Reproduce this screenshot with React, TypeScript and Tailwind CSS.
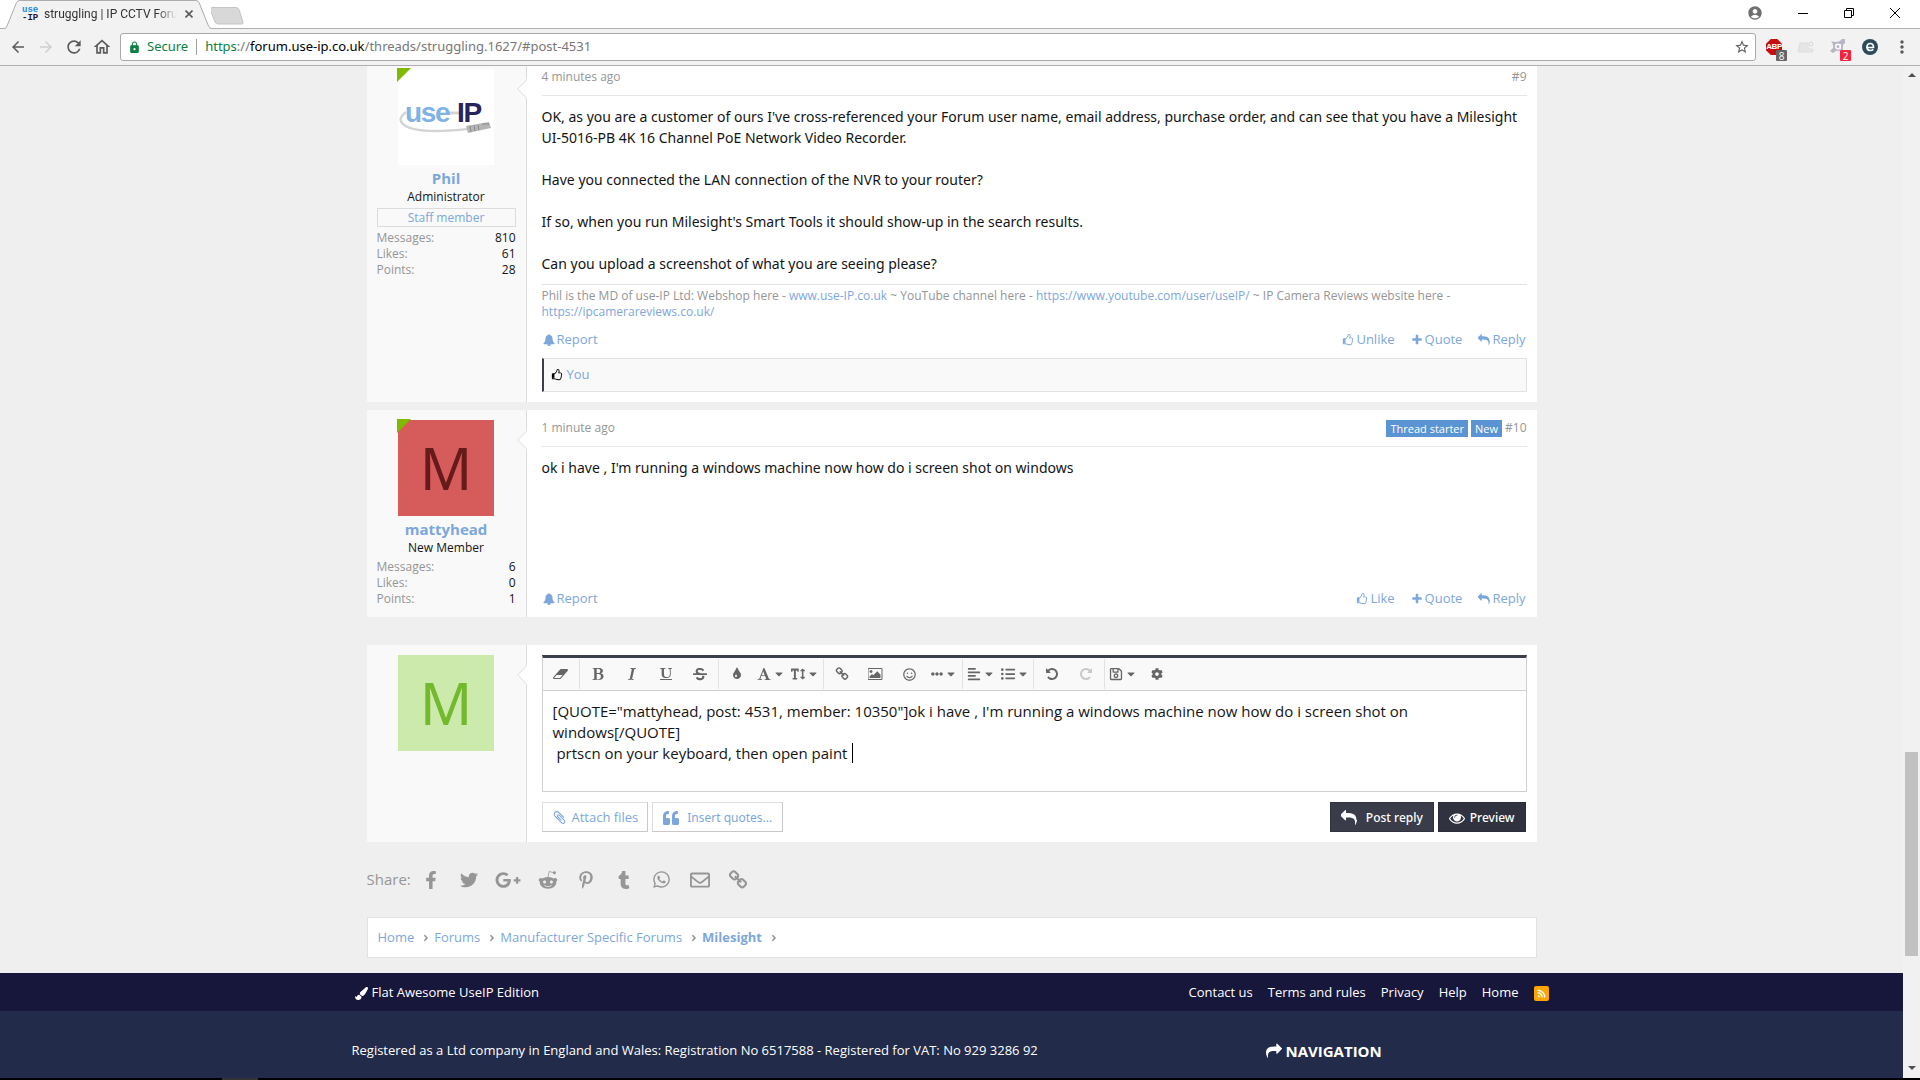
import type { ReactNode } from 'react'
import {
  FaAlignLeft,
  FaAngleRight,
  FaCaretDown,
  FaCog,
  FaEllipsisH,
  FaFacebookF,
  FaGooglePlusG,
  FaListUl,
  FaPaintBrush,
  FaPinterestP,
  FaQuoteLeft,
  FaRedditAlien,
  FaRegEnvelope,
  FaRegSave,
  FaRegSmile,
  FaRss,
  FaStrikethrough,
  FaTextHeight,
  FaTumblr,
  FaTwitter,
  FaWhatsapp,
} from 'react-icons/fa'
import {
  MdAccountCircle,
  MdArrowBack,
  MdArrowForward,
  MdLock,
  MdMoreVert,
  MdOutlineHome,
  MdRefresh,
  MdStarBorder,
} from 'react-icons/md'

const paths = {
  bell: 'M912 1696q0-16-16-16-59 0-101.5-42.5t-42.5-101.5q0-16-16-16t-16 16q0 73 51.5 124.5t124.5 51.5q16 0 16-16zm816-288q0 52-38 90t-90 38h-448q0 106-75 181t-181 75-181-75-75-181h-448q-52 0-90-38t-38-90q50-42 91-88t85-119.5 74.5-158.5 50-206 19.5-260q0-152 117-282.5t307-158.5q-8-19-8-39 0-40 28-68t68-28 68 28 28 68q0 20-8 39 190 28 307 158.5t117 282.5q0 139 19.5 260t50 206 74.5 158.5 85 119.5 91 88z',
  bold: 'M747 1521q74 32 140 32 376 0 376-335 0-114-41-180-27-44-61.5-74t-67.5-46.5-80.5-25-84-10.5-94.5-2q-73 0-101 10 0 53-.5 159t-.5 158q0 8-1 67.5t-.5 96.5 4.5 83.5 12 66.5zm-14-746q42 7 109 7 82 0 143-13t110-44.5 74.5-89.5 25.5-142q0-70-29-122.5t-79-82-108-43.5-124-14q-50 0-130 13 0 50 4 151t4 152q0 27-.5 80t-.5 79q0 46 1 69zm-541 889l2-94q15-4 85-16t106-27q7-12 12.5-27t8.5-33.5 5.5-32.5 3-37.5.5-34v-65.5q0-982-22-1025-4-8-22-14.5t-44.5-11-49.5-7-48.5-4.5-30.5-3l-4-83q98-2 340-11.5t373-9.5q23 0 68 .5t68 .5q70 0 136.5 13t128.5 42 108 71 74 104.5 28 137.5q0 52-16.5 95.5t-39 72-64.5 57.5-73 45-84 40q154 35 256.5 134t102.5 248q0 100-35 179.5t-93.5 130.5-138 85.5-163.5 48.5-176 14q-44 0-132-3t-132-3q-106 0-307 11t-231 12z',
  italic:
    'M384 1662l17-85q6-2 81.5-21.5t111.5-37.5q28-35 41-101 1-7 62-289t114-543.5 52-296.5v-25q-24-13-54.5-18.5t-69.5-8-58-5.5l19-103q33 2 120 6.5t149.5 7 120.5 2.5q48 0 98.5-2.5t121-7 98.5-6.5q-5 39-19 89-30 10-101.5 28.5t-108.5 33.5q-8 19-14 42.5t-9 40-7.5 45.5-6.5 42q-27 148-87.5 419.5t-77.5 355.5q-2 9-13 58t-20 90-16 83.5-6 57.5l1 18q17 4 185 31-3 44-16 99-11 0-32.5 1.5t-32.5 1.5q-29 0-87-10t-86-10q-138-2-206-2-51 0-143 9t-121 11z',
  underline:
    'M176 223q-37-2-45-4l-3-88q13-1 40-1 60 0 112 4 132 7 166 7 86 0 168-3 116-4 146-5 56 0 86-2l-1 14 2 64v9q-60 9-124 9-60 0-79 25-13 14-13 132 0 13 .5 32.5t.5 25.5l1 229 14 280q6 124 51 202 35 59 96 92 88 47 177 47 104 0 191-28 56-18 99-51 48-36 65-64 36-56 53-114 21-73 21-229 0-79-3.5-128t-11-122.5-13.5-159.5l-4-59q-5-67-24-88-34-35-77-34l-100 2-14-3 2-86h84l205 10q76 3 196-10l18 2q6 38 6 51 0 7-4 31-45 12-84 13-73 11-79 17-15 15-15 41 0 7 1.5 27t1.5 31q8 19 22 396 6 195-15 304-15 76-41 122-38 65-112 123-75 57-182 89-109 33-255 33-167 0-284-46-119-47-179-122-61-76-83-195-16-80-16-237v-333q0-188-17-213-25-36-147-39zm1488 1409v-64q0-14-9-23t-23-9h-1472q-14 0-23 9t-9 23v64q0 14 9 23t23 9h1472q14 0 23-9t9-23z',
  font: 'M789 559l-170 450q33 0 136.5 2t160.5 2q19 0 57-2-87-253-184-452zm-725 1105l2-79q23-7 56-12.5t57-10.5 49.5-14.5 44.5-29 31-50.5l237-616 280-724h128q8 14 11 21l205 480q33 78 106 257.5t114 274.5q15 34 58 144.500t72 168.500q20 45 35 57 19 15 88 29.500t84 20.500q6 38 6 57 0 5-.5 13.500t-.5 12.500q-63 0-190-8t-191-8q-76 0-215 7t-178 8q0-43 4-78l131-28q1 0 12.500-2.500t15.500-3.500 14.500-4.500 15-6.500 11-8 9-11 2.500-14q0-16-31-96.500t-72-177.500-42-100l-450-2q-26 58-76.500 195.500t-50.500 162.500q0 22 14 37.500t43.500 24.500 48.500 13.500 57 8.500 41 4q1 19 1 58 0 9-2 27-58 0-174.500-10t-174.500-10q-8 0-26.500 4t-21.500 4q-80 14-188 14z',
  reply:
    'M1792 1120q0 166-127 451-3 7-10.5 24t-13.5 30-13 22q-12 17-28 17-15 0-23.5-10t-8.5-25q0-9 2.5-26.5t2.5-23.5q5-68 5-123 0-112-19.5-200.5t-54-153.5-89-112-117-78-147-46.5-169.5-23-197-5.5h-224v256q0 26-19 45t-45 19-45-19l-512-512q-19-19-19-45t19-45l512-512q19-19 45-19t45 19 19 45v256h224q713 0 875 403 53 134 53 333z',
  share:
    'M1792 640q0 26-19 45l-512 512q-19 19-45 19t-45-19-19-45v-256h-224q-98 0-175.5 6t-154 21.5-133 42.5-105.5 69.5-80 101-48.5 138.5-17.5 181q0 55 5 123 0 6 2.5 23.5t2.5 26.5q0 15-8.5 25t-23.5 10q-16 0-28-17-7-9-13-22t-13.5-30-10.5-24q-127-285-127-451 0-199 53-333 162-403 875-403h224v-256q0-26 19-45t45-19 45 19l512 512q19 19 19 45z',
  plus: 'M1600 736v192q0 40-28 68t-68 28h-416v416q0 40-28 68t-68 28h-192q-40 0-68-28t-28-68v-416h-416q-40 0-68-28t-28-68v-192q0-40 28-68t68-28h416v-416q0-40 28-68t68-28h192q40 0 68 28t28 68v416h416q40 0 68 28t28 68z',
  thumb:
    'M384 1344q0-26-19-45t-45-19-45 19-19 45 19 45 45 19 45-19 19-45zm1152-576q0-51-39-89.5t-89-38.5h-352q0-58 48-159.5t48-160.5q0-98-32-145t-128-47q-26 26-38 85t-30.5 125.5-59.5 109.5q-22 23-77 91-4 5-23 30t-31.5 41-34.5 42.5-40 44-38.5 35.5-40 27-35.5 9h-32v640h32q13 0 31.5 3t33 6.5 38 11 35 11.5 35.5 12.5 29 10.5q211 73 342 73h121q192 0 192-167 0-26-5-56 30-16 47.5-52.5t17.5-73.5-18-69q53-50 53-119 0-25-10-55.5t-25-47.5q32-1 53.5-47t21.5-81zm128-1q0 89-49 163 9 33 9 69 0 77-38 144 3 21 3 43 0 101-60 178 1 139-85 219.5t-227 80.5h-129q-96 0-189.5-22.5t-216.5-65.5q-116-40-138-40h-288q-53 0-90.5-37.5t-37.5-90.5v-640q0-53 37.5-90.5t90.5-37.5h274q36-24 137-155 58-75 107-128 24-25 35.5-85.5t30.5-126.5 62-108q39-37 90-37 84 0 151 32.5t102 101.5 35 186q0 93-48 192h176q104 0 180 76t76 179z',
  eraser:
    'M896 1408l336-384h-768l-336 384h768zm1013-1077q15 34 9.5 71.5t-30.5 65.5l-896 1024q-38 44-96 44h-768q-38 0-69.5-20.5t-47.5-54.5q-15-34-9.5-71.5t30.5-65.5l896-1024q38-44 96-44h768q38 0 69.5 20.5t47.5 54.5z',
  tint: 'M896 1152q0-36-20-69-1-1-15.5-22.5t-25.5-38-25-44-21-50.5q-4-16-21-16t-21 16q-7 23-21 50.5t-25 44-25.5 38-15.5 22.5q-20 33-20 69 0 53 37.5 90.5t90.5 37.5 90.5-37.5 37.5-90.5zm512-128q0 212-150 362t-362 150-362-150-150-362q0-145 81-275 6-9 62.5-90.5t101-151 99.5-178 83-201.5q9-30 34-47t51-17 51.5 17 33.5 47q28 93 83 201.5t99.5 178 101 151 62.5 90.5q81 127 81 275z',
  picture:
    'M576 576q0 80-56 136t-136 56-136-56-56-136 56-136 136-56 136 56 56 136zm1024 384v448h-1408v-192l320-320 160 160 512-512zm96-704h-1600q-13 0-22.5 9.5t-9.5 22.5v1216q0 13 9.5 22.5t22.5 9.5h1600q13 0 22.5-9.5t9.5-22.5v-1216q0-13-9.5-22.5t-22.5-9.5zm160 32v1216q0 66-47 113t-113 47h-1600q-66 0-113-47t-47-113v-1216q0-66 47-113t113-47h1600q66 0 113 47t47 113z',
  chain:
    'M1520 1216q0-40-28-68l-208-208q-28-28-68-28-42 0-72 32 3 3 19 18.5t21.5 21.5 15 19 13 25.5 3.5 27.5q0 40-28 68t-68 28q-15 0-27.5-3.5t-25.5-13-19-15-21.5-21.5-18.5-19q-33 31-33 73 0 40 28 68l206 207q27 27 68 27 40 0 68-26l147-146q28-28 28-67zm-703-705q0-40-28-68l-206-207q-28-28-68-28-39 0-68 27l-147 146q-28 28-28 67 0 40 28 68l208 208q27 27 68 27 42 0 72-31-3-3-19-18.5t-21.5-21.5-15-19-13-25.5-3.5-27.5q0-40 28-68t68-28q15 0 27.5 3.5t25.5 13 19 15 21.5 21.5 18.5 19q33-31 33-73zm895 705q0 120-85 203l-147 146q-83 83-203 83-121 0-204-85l-206-207q-83-83-83-203 0-123 88-209l-88-88q-86 88-208 88-120 0-204-84l-208-208q-84-84-84-204t85-203l147-146q83-83 203-83 121 0 204 85l206 207q83 83 83 203 0 123-88 209l88 88q86-88 208-88 120 0 204 84l208 208q84 84 84 204z',
  undo: 'M1664 896q0 156-61 298t-164 245-245 164-298 61q-172 0-327-72.5t-264-204.5q-7-10-6.5-22.5t8.5-20.5l137-138q10-9 25-9 16 2 23 12 73 95 179 147t225 52q104 0 198.5-40.5t163.5-109.5 109.5-163.5 40.5-198.5-40.5-198.5-109.5-163.5-163.5-109.5-198.5-40.5q-98 0-188 35.5t-160 101.5l137 138q31 30 14 69-17 40-59 40h-448q-26 0-45-19t-19-45v-448q0-42 40-59 39-17 69 14l130 129q107-101 244.5-156.5t284.5-55.5q156 0 298 61t245 164 164 245 61 298z',
  clip: 'M1596 1385q0 117-79 196t-196 79q-135 0-235-100l-777-776q-113-115-113-271 0-159 110-270t269-111q158 0 273 113l605 606q10 10 10 22 0 16-30.5 46.5t-46.5 30.5q-13 0-23-10l-606-607q-79-77-181-77-106 0-179 75t-73 181q0 105 76 181l776 777q63 63 145 63 64 0 106-42t42-106q0-82-63-145l-581-581q-26-24-60-24-29 0-48 19t-19 48q0 32 25 59l410 410q10 10 10 22 0 16-31 47t-47 31q-12 0-22-10l-410-410q-63-61-63-149 0-82 57-139t139-57q88 0 149 63l581 581q100 98 100 235z',
  eye: 'M1664 960q-152-236-381-353 61 104 61 225 0 185-131.5 316.5t-316.5 131.5-316.5-131.5-131.5-316.5q0-121 61-225-229 117-381 353 133 205 333.5 326.5t434.5 121.5 434.5-121.5 333.5-326.5zm-720-384q0-20-14-34t-34-14q-125 0-214.5 89.5t-89.5 214.5q0 20 14 34t34 14 34-14 14-34q0-86 61-147t147-61q20 0 34-14t14-34zm848 384q0 34-20 69-140 230-376.5 368.5t-499.5 138.5-499.5-139-376.5-368q-20-35-20-69t20-69q140-229 376.5-368t499.5-139 499.5 139 376.5 368q20 35 20 69z',
}

type GlyphProps = {
  name: keyof typeof paths
  className?: string
}

function Glyph({ name, className = 'size-3' }: GlyphProps) {
  const width = name === 'eraser' || name === 'picture' ? 1920 : 1792
  return (
    <svg
      viewBox={`0 0 ${width} 1792`}
      fill="currentColor"
      aria-hidden="true"
      className={`shrink-0 ${className}`}
    >
      <path d={paths[name]} />
    </svg>
  )
}

function Tab() {
  return (
    <div className="relative flex h-7 w-[212px] items-center pr-5 pl-[22px]">
      <svg
        viewBox="0 0 212 29"
        className="absolute top-0 left-0 z-10 h-[29px] w-[212px]"
        aria-hidden="true"
      >
        <path d="M4 29 L6 28 L17 1 L19 0 H197 L199 1 L209 28 L212 29 Z" fill="#f2f2f2" />
        <path
          d="M0 28.5 H4 Q6 28.5 7 26 L16.5 2.5 Q17.5 .5 20 .5 H196 Q198 .5 199 2.5 L208.5 26 Q209.5 28.5 212 28.5"
          fill="none"
          stroke="#adadad"
        />
      </svg>
      <div className="relative z-20 flex w-full items-center">
        <span className="w-4 text-center font-['Liberation_Mono'] text-[9px] leading-[8px] font-bold whitespace-nowrap text-[#1d8be8]">
          use
          <span className="block text-[#1a1640]">-IP</span>
        </span>
        <span className="ml-[6px] w-[133px] mask-r-from-85% font-['Roboto'] text-xs whitespace-nowrap text-[#333]">
          struggling | IP CCTV Foru
        </span>
        <button aria-label="Close tab" className="ml-2">
          <svg viewBox="0 0 8 8" className="size-2" stroke="#5a5a5a" strokeWidth="1.6">
            <path d="M.5 .5 L7.5 7.5 M7.5 .5 L.5 7.5" />
          </svg>
        </button>
      </div>
    </div>
  )
}

function TitleBar() {
  return (
    <div className="flex h-7 shrink-0 items-start bg-white">
      <Tab />
      <button aria-label="New tab" className="mt-[7px] -ml-px">
        <svg viewBox="0 0 36 18" className="h-[18px] w-9">
          <path
            d="M1 .5 H25 Q27 .5 28 2.5 L32 15 Q32.5 17 30.5 17 H7 Q5 17 4 15 L-1 2 Z"
            fill="#d8d8d8"
            stroke="#c4c4c4"
          />
        </svg>
      </button>
      <div className="ml-auto flex h-[26px] items-center pr-[2px] text-black">
        <button aria-label="Account" className="mr-[17px]">
          <MdAccountCircle className="size-4 text-[#6e6e6e]" />
        </button>
        <button aria-label="Minimize" className="grid w-[46px] place-items-center">
          <span className="h-px w-[10px] bg-black" />
        </button>
        <button aria-label="Restore" className="grid w-[46px] place-items-center">
          <svg viewBox="0 0 10 10" className="size-[10px]" fill="none" stroke="black">
            <path d="M.5 2.5 H7.5 V9.5 H.5 Z M2.5 2.5 V.5 H9.5 V7.5 H7.5" />
          </svg>
        </button>
        <button aria-label="Close" className="grid w-[46px] place-items-center">
          <svg viewBox="0 0 10 10" className="size-[10px]" stroke="black">
            <path d="M0 0 L10 10 M10 0 L0 10" />
          </svg>
        </button>
      </div>
    </div>
  )
}

function AddressBar() {
  return (
    <div className="flex h-[38px] shrink-0 items-center border-y border-[#b0b0b0] bg-[#f2f2f2] pr-[2px] pl-1 text-[#5a5a5a]">
      <button aria-label="Back" className="grid w-7 place-items-center">
        <MdArrowBack className="size-[18px]" />
      </button>
      <button aria-label="Forward" className="grid w-7 place-items-center text-[#d0d0d0]">
        <MdArrowForward className="size-[18px]" />
      </button>
      <button aria-label="Reload" className="grid w-7 place-items-center">
        <MdRefresh className="size-5" />
      </button>
      <button aria-label="Home" className="grid w-7 place-items-center">
        <MdOutlineHome className="size-5" />
      </button>
      <div className="ml-1 flex h-7 flex-1 items-center rounded-[3px] border border-[#a9a9a9] bg-white pr-[5px] pl-[7px] font-['Noto_Sans'] text-[13px]">
        <MdLock className="size-[13px] text-[#0b8043]" />
        <span className="ml-[6px] text-[#0b8043]">Secure</span>
        <span className="mx-2 h-4 w-px bg-[#a0a0a0]" />
        <div
          role="textbox"
          aria-label="Address"
          contentEditable
          suppressContentEditableWarning
          className="flex-1 whitespace-nowrap text-[#777]"
        >
          <span className="text-[#0b8043]">https</span>://
          <span className="text-black">forum.use-ip.co.uk</span>
          /threads/struggling.1627/#post-4531
        </div>
        <button aria-label="Bookmark this page">
          <MdStarBorder className="size-4" />
        </button>
      </div>
      <div className="ml-[2px] flex items-center">
        <button aria-label="ABP" className="relative grid w-8 place-items-center">
          <span className="grid size-4 place-items-center bg-[#c70d0c] font-['Liberation_Sans'] text-[8px] font-bold tracking-tighter text-white [clip-path:polygon(30%_0,70%_0,100%_30%,100%_70%,70%_100%,30%_100%,0_70%,0_30%)]">
            ABP
          </span>
          <span className="absolute top-[11px] left-[18px] grid h-[11px] w-[11px] place-items-center rounded-[1px] bg-[#666] text-[10px] leading-none text-white">
            8
          </span>
        </button>
        <button aria-label="Extension" className="grid w-8 place-items-center">
          <svg viewBox="0 0 18 14" className="h-[14px] w-[18px]">
            <path d="M3 3 H11 V9 H16 V12 H1 Z" fill="#e6e6e6" stroke="#dedede" />
            <circle cx="14" cy="4" r="2" fill="none" stroke="#d8d8d8" />
          </svg>
        </button>
        <button aria-label="Security" className="relative grid w-8 place-items-center">
          <svg viewBox="0 0 16 16" className="size-4">
            <path
              d="M1 2 Q6 4 10 2 L12 0 H15 V4 L13 6 Q12 10 14 13 Q10 11 6 12 L3 14 L0 12 L3 9 Q4 6 1 2 Z"
              fill="#b6b6c4"
            />
            <circle cx="8" cy="7.5" r="2.3" fill="none" stroke="#fff" strokeWidth="1.4" />
            <path d="M10.3 5 V10.5" stroke="#fff" strokeWidth="1.4" />
          </svg>
          <span className="absolute top-[11px] left-[18px] grid h-[11px] w-[11px] place-items-center rounded-[1px] bg-[#f6233c] text-[10px] leading-none text-white">
            2
          </span>
        </button>
        <button aria-label="Privacy" className="grid w-8 place-items-center">
          <svg viewBox="0 0 16 16" className="size-4">
            <circle cx="8" cy="8" r="8" fill="#2c4a5c" />
            <path
              d="M4 8.5 H11.5 Q11.5 4.5 8.2 4.5 Q5 4.5 5 8.2 Q5 11.5 8.3 11.5 Q10 11.5 11.3 10.4"
              fill="none"
              stroke="#fff"
              strokeWidth="1.7"
            />
          </svg>
        </button>
        <button aria-label="Menu" className="grid w-8 place-items-center">
          <MdMoreVert className="size-5" />
        </button>
      </div>
    </div>
  )
}

type LetterAvatarProps = {
  className: string
}

function LetterAvatar({ className }: LetterAvatarProps) {
  return (
    <div
      className={`grid size-24 place-items-center font-['Noto_Sans'] text-[58px] leading-none ${className}`}
    >
      M
    </div>
  )
}

function LogoAvatar() {
  return (
    <div className="relative size-24 bg-white">
      <svg viewBox="0 0 96 96" className="size-24" aria-hidden="true">
        <path
          d="M8 43 Q0 49 4 54 Q14 66 70 60"
          fill="none"
          stroke="#d4d4d6"
          strokeWidth="2.5"
        />
        <path d="M50 44 H62" stroke="#d4d4d6" strokeWidth="3" />
        <path d="M68 57 L91 53 L93 59 L70 64 Z" fill="#b5b5b5" />
        <path d="M72 57 L73 63 M76 56 L77 62 M80 56 L81 61 M84 55 H91" stroke="#8a8a8a" />
      </svg>
      <div className="absolute inset-x-0 top-8 flex pl-[7px] font-['Liberation_Sans'] text-[28px] leading-6 font-bold tracking-tighter">
        <span className="text-[#7fb2e5]">use</span>
        <span className="ml-2 text-[#28235c]">IP</span>
      </div>
    </div>
  )
}

type UserCellProps = {
  avatar: ReactNode
  online?: boolean
  children?: ReactNode
}

function UserCell({ avatar, online, children }: UserCellProps) {
  return (
    <div className="relative w-40 shrink-0 border-r border-[#dcdcdc] bg-[#f9f9f9] px-[10px] pt-[10px] pb-2">
      <svg
        viewBox="0 0 10 20"
        className="absolute top-5 -right-px h-5 w-[10px]"
        aria-hidden="true"
      >
        <path d="M10 0 L.5 10 L10 20" fill="#fff" />
        <path d="M9.5 1 L.7 10 L9.5 19" fill="none" stroke="#dcdcdc" />
      </svg>
      <div className="relative mx-auto w-24">
        {avatar}
        {online ? (
          <span className="absolute -top-px -left-px border-t-14 border-r-14 border-t-[#7fb900] border-r-transparent" />
        ) : null}
      </div>
      {children}
    </div>
  )
}

type UserInfoProps = {
  name: string
  title: string
  staff?: boolean
  stats: [string, number][]
}

function UserInfo({ name, title, staff, stats }: UserInfoProps) {
  return (
    <div className="mt-[3px] text-center">
      <a href="#user" className="block text-[15px] leading-[21px] font-bold text-[#7da7dc]">
        {name}
      </a>
      <div className="text-xs leading-4 text-[#141414]">{title}</div>
      {staff ? (
        <div className="mt-[3px] border border-[#dcdcdc] text-xs leading-[17px] text-[#7da7dc]">
          Staff member
        </div>
      ) : null}
      <dl className="mt-[3px] text-xs leading-4">
        {stats.map(([label, value]) => (
          <div key={label} className="flex justify-between">
            <dt className="text-[#969696]">{label}:</dt>
            <dd className="text-[#141414]">{value}</dd>
          </div>
        ))}
      </dl>
    </div>
  )
}

type ActionProps = {
  icon: keyof typeof paths
  label: string
}

function Action({ icon, label }: ActionProps) {
  return (
    <a href={`#${label}`} className="flex items-center gap-[2px]">
      <Glyph name={icon} />
      {label}
    </a>
  )
}

type PostProps = {
  user: ReactNode
  time: string
  number: number
  badges?: string[]
  likeLabel: string
  footer?: ReactNode
  className?: string
  children: ReactNode
}

function Post({
  user,
  time,
  number,
  badges = [],
  likeLabel,
  footer,
  className = '',
  children,
}: PostProps) {
  return (
    <article className={`flex bg-white ${className}`.trim()}>
      {user}
      <div className="flex flex-1 flex-col pr-[10px] pl-[15px]">
        <header className="flex h-[37px] shrink-0 items-center border-b border-[#e6e6e6] text-xs text-[#969696]">
          <a href="#post">{time}</a>
          <div className="ml-auto flex items-center gap-[3px]">
            {badges.map((badge) => (
              <span
                key={badge}
                className="bg-[#5b94d3] px-1 text-[11px] leading-[17px] font-medium text-white"
              >
                {badge}
              </span>
            ))}
            <a href="#post">#{number}</a>
          </div>
        </header>
        {children}
        <div className="mt-auto flex h-9 items-center px-px text-[13px] text-[#7da7dc]">
          <Action icon="bell" label="Report" />
          <div className="ml-auto flex gap-4">
            <Action icon="thumb" label={likeLabel} />
            <Action icon="plus" label="Quote" />
            <Action icon="reply" label="Reply" />
          </div>
        </div>
        {footer}
      </div>
    </article>
  )
}

type ToolProps = {
  label: string
  menu?: boolean
  children: ReactNode
}

function Tool({ label, menu, children }: ToolProps) {
  return (
    <button
      type="button"
      aria-label={label}
      title={label}
      className="flex h-8 w-[34px] items-center justify-center gap-[2px]"
    >
      {children}
      {menu ? <FaCaretDown className="size-3" /> : null}
    </button>
  )
}

function ToolGroup({ children, last }: { children: ReactNode; last?: boolean }) {
  return (
    <div
      className={
        last
          ? 'flex px-px'
          : 'flex h-[30px] items-center border-r border-[#e2e2e2] px-px'
      }
    >
      {children}
    </div>
  )
}

function EditorToolbar() {
  return (
    <div className="flex h-[33px] items-center border-b border-[#d0d0d0] bg-[#f9f9f9] text-[#666]">
      <ToolGroup>
        <Tool label="Remove formatting">
          <Glyph name="eraser" className="h-[14px] w-[15px]" />
        </Tool>
      </ToolGroup>
      <ToolGroup>
        <Tool label="Bold">
          <Glyph name="bold" className="size-[14px]" />
        </Tool>
        <Tool label="Italic">
          <Glyph name="italic" className="size-[14px]" />
        </Tool>
        <Tool label="Underline">
          <Glyph name="underline" className="size-[14px]" />
        </Tool>
        <Tool label="Strike-through">
          <FaStrikethrough className="size-[14px]" />
        </Tool>
      </ToolGroup>
      <ToolGroup>
        <Tool label="Text color">
          <Glyph name="tint" className="size-[14px]" />
        </Tool>
        <Tool label="Font family" menu>
          <Glyph name="font" className="size-[14px]" />
        </Tool>
        <Tool label="Font size" menu>
          <FaTextHeight className="size-[14px]" />
        </Tool>
      </ToolGroup>
      <ToolGroup>
        <Tool label="Link">
          <Glyph name="chain" className="size-[14px]" />
        </Tool>
        <Tool label="Image">
          <Glyph name="picture" className="h-[14px] w-[15px]" />
        </Tool>
        <Tool label="Smilies">
          <FaRegSmile className="size-[13px]" />
        </Tool>
        <Tool label="Insert" menu>
          <FaEllipsisH className="size-3" />
        </Tool>
      </ToolGroup>
      <ToolGroup>
        <Tool label="Alignment" menu>
          <FaAlignLeft className="size-[14px]" />
        </Tool>
        <Tool label="List" menu>
          <FaListUl className="size-[14px]" />
        </Tool>
      </ToolGroup>
      <ToolGroup>
        <Tool label="Undo">
          <Glyph name="undo" className="size-[14px]" />
        </Tool>
        <Tool label="Redo">
          <Glyph name="undo" className="size-[14px] -scale-x-100 text-[#c8c8c8]" />
        </Tool>
      </ToolGroup>
      <ToolGroup last>
        <Tool label="Drafts" menu>
          <FaRegSave className="size-[14px]" />
        </Tool>
        <Tool label="Use BB code editor">
          <FaCog className="size-3" />
        </Tool>
      </ToolGroup>
    </div>
  )
}

const draft = `[QUOTE="mattyhead, post: 4531, member: 10350"]ok i have , I'm running a windows machine now how do i screen shot on windows[/QUOTE]
 prtscn on your keyboard, then open paint `

function ReplyForm() {
  return (
    <form className="mt-7 flex bg-white">
      <UserCell avatar={<LetterAvatar className="bg-[#cceaac] text-[#72b92e]" />} />
      <div className="flex-1 py-[10px] pr-[10px] pl-[15px]">
        <div className="border border-t-3 border-[#d0d0d0] border-t-[#3b3f4a]">
          <EditorToolbar />
          <div className="relative">
            <textarea
              aria-label="Message"
              defaultValue={draft}
              className="block h-[100px] w-full resize-none px-[10px] py-[10px] text-[15px] leading-[21px] text-[#141414] outline-none"
            />
            <span className="absolute top-[52px] left-[309px] h-5 w-px bg-black" />
          </div>
        </div>
        <div className="mt-[10px] flex gap-1">
          <button
            type="button"
            className="flex h-[30px] items-center gap-[5px] border border-[#dcdcdc] border-r-[#c8c8c8] border-b-[#c8c8c8] px-[9px] pt-px text-[13px] text-[#7da7dc]"
          >
            <Glyph name="clip" className="size-[15px]" />
            Attach files
          </button>
          <button
            type="button"
            className="flex h-[30px] items-center gap-2 border border-[#dcdcdc] border-r-[#c8c8c8] border-b-[#c8c8c8] px-[10px] pt-px font-['Noto_Sans'] text-xs text-[#7da7dc]"
          >
            <FaQuoteLeft className="size-4" />
            Insert quotes...
          </button>
          <button
            type="submit"
            className="ml-auto flex h-[30px] items-center gap-[9px] border border-[#30333f] bg-[#3a3d49] px-[10px] pt-px font-['Noto_Sans'] text-xs font-medium text-white"
          >
            <Glyph name="reply" className="size-4" />
            Post reply
          </button>
          <button
            type="button"
            className="mr-px flex h-[30px] items-center gap-[5px] border border-[#2a2d38] bg-[#30333f] px-[10px] pt-px font-['Noto_Sans'] text-xs font-medium text-white"
          >
            <Glyph name="eye" className="size-4" />
            Preview
          </button>
        </div>
      </div>
    </form>
  )
}

const shareTargets: [string, ReactNode][] = [
  ['Facebook', <FaFacebookF className="size-[18px]" />],
  ['Twitter', <FaTwitter className="size-[18px]" />],
  ['Google+', <FaGooglePlusG className="size-[26px]" />],
  ['Reddit', <FaRedditAlien className="size-5" />],
  ['Pinterest', <FaPinterestP className="size-[18px]" />],
  ['Tumblr', <FaTumblr className="size-[18px]" />],
  ['WhatsApp', <FaWhatsapp className="size-[19px]" />],
  ['Email', <FaRegEnvelope className="size-5" />],
  ['Link', <Glyph name="chain" className="size-5" />],
]

function ShareRow() {
  return (
    <div className="mt-5 flex h-[35px] items-center text-[15px] text-[#969696]">
      <span className="w-[45px]">Share:</span>
      {shareTargets.map(([name, icon]) => (
        <a
          key={name}
          href={`#${name}`}
          aria-label={name}
          className={`flex justify-center ${name === 'Google+' ? 'w-[41px]' : 'w-[38px]'}`}
        >
          {icon}
        </a>
      ))}
    </div>
  )
}

const crumbs = ['Home', 'Forums', 'Manufacturer Specific Forums', 'Milesight']

function Breadcrumb() {
  return (
    <nav className="mt-5 flex h-[41px] items-center border border-[#e2e2e2] bg-white px-[10px] text-[13px] text-[#7da7dc]">
      {crumbs.map((crumb) => (
        <span key={crumb} className="flex items-center">
          <a href={`#${crumb}`} className={crumb === 'Milesight' ? 'font-bold' : ''}>
            {crumb}
          </a>
          <FaAngleRight className="mr-[3px] ml-[7px] size-[10px] text-[#969696]" />
        </span>
      ))}
    </nav>
  )
}

function Footer() {
  return (
    <footer className="flex flex-1 flex-col bg-[#222b49] text-[13px] text-white">
      <div className="bg-[#17163b]">
        <div className="mx-auto flex h-[38px] max-w-[1194px] items-center pt-[2px]">
          <a href="#style" className="flex items-center gap-1">
            <FaPaintBrush className="size-[13px]" />
            Flat Awesome UseIP Edition
          </a>
          <div className="ml-auto flex items-center gap-[15px]">
            <a href="#contact">Contact us</a>
            <a href="#terms">Terms and rules</a>
            <a href="#privacy">Privacy</a>
            <a href="#help">Help</a>
            <a href="#home">Home</a>
            <a
              href="#rss"
              aria-label="RSS"
              className="grid size-[15px] place-items-center rounded-[2px] bg-[#ffa500]"
            >
              <FaRss className="size-[9px]" />
            </a>
          </div>
        </div>
      </div>
      <div className="mx-auto flex w-full max-w-[1200px] pt-7">
        <p className="w-[914px] leading-[22px]">
          Registered as a Ltd company in England and Wales: Registration No 6517588 - Registered
          for VAT: No 929 3286 92
        </p>
        <h3 className="flex items-center gap-1 text-[15px] leading-6 font-bold">
          <Glyph name="share" className="size-4" />
          NAVIGATION
        </h3>
      </div>
    </footer>
  )
}

function Scrollbar() {
  return (
    <div className="flex w-[17px] shrink-0 flex-col items-center bg-[#f1f1f1]">
      <span className="mt-[7px] border-x-4 border-b-4 border-x-transparent border-b-[#505050]" />
      <span className="mt-auto h-[204px] w-[13px] bg-[#c1c1c1]" />
      <span className="mt-[110px] mb-2 border-x-4 border-t-4 border-x-transparent border-t-[#505050]" />
    </div>
  )
}

export default function App() {
  return (
    <div className="flex h-screen flex-col overflow-hidden bg-[#efefef] font-['Open_Sans',sans-serif]">
      <TitleBar />
      <AddressBar />
      <div className="flex min-h-0 flex-1">
        <main className="flex min-w-0 flex-1 flex-col overflow-hidden">
          <div className="mx-auto w-full max-w-[1170px]">
            <Post
              className="-mt-[7px] h-[343px]"
              time="4 minutes ago"
              number={9}
              likeLabel="Unlike"
              user={
                <UserCell avatar={<LogoAvatar />} online>
                  <UserInfo
                    name="Phil"
                    title="Administrator"
                    staff
                    stats={[
                      ['Messages', 810],
                      ['Likes', 61],
                      ['Points', 28],
                    ]}
                  />
                </UserCell>
              }
              footer={
                <div className="mb-[10px] flex h-[34px] shrink-0 items-center gap-1 border border-l-2 border-[#e2e2e2] border-l-[#3b3f4c] bg-[#f9f9f9] px-[7px] text-[13px]">
                  <Glyph name="thumb" />
                  <a href="#you" className="text-[#7da7dc]">
                    You
                  </a>
                </div>
              }
            >
              <div className="mt-[10px] font-['Noto_Sans'] text-sm leading-[21px] text-[#141414]">
                <p>
                  OK, as you are a customer of ours I've cross-referenced your Forum user name,
                  email address, purchase order, and can see that you have a Milesight UI-5016-PB
                  4K 16 Channel PoE Network Video Recorder.
                </p>
                <p className="mt-[21px]">
                  Have you connected the LAN connection of the NVR to your router?
                </p>
                <p className="mt-[21px]">
                  If so, when you run Milesight's Smart Tools it should show-up in the search
                  results.
                </p>
                <p className="mt-[21px]">
                  Can you upload a screenshot of what you are seeing please?
                </p>
              </div>
              <div className="mt-[10px] border-t border-[#e2e2e2] pt-[3px] text-xs leading-4 text-[#969696]">
                Phil is the MD of use-IP Ltd: Webshop here -{' '}
                <a href="#shop" className="text-[#7da7dc]">
                  www.use-IP.co.uk
                </a>{' '}
                ~ YouTube channel here -{' '}
                <a href="#youtube" className="text-[#7da7dc]">
                  https://www.youtube.com/user/useIP/
                </a>{' '}
                ~ IP Camera Reviews website here -{' '}
                <a href="#reviews" className="text-[#7da7dc]">
                  https://ipcamerareviews.co.uk/
                </a>
              </div>
            </Post>
            <Post
              className="mt-2 h-[207px]"
              time="1 minute ago"
              number={10}
              badges={['Thread starter', 'New']}
              likeLabel="Like"
              user={
                <UserCell
                  avatar={<LetterAvatar className="bg-[#d65c5c] text-[#661a1a]" />}
                  online
                >
                  <UserInfo
                    name="mattyhead"
                    title="New Member"
                    stats={[
                      ['Messages', 6],
                      ['Likes', 0],
                      ['Points', 1],
                    ]}
                  />
                </UserCell>
              }
            >
              <p className="mt-[10px] font-['Noto_Sans'] text-sm leading-[21px] text-[#141414]">
                ok i have , I'm running a windows machine now how do i screen shot on windows
              </p>
            </Post>
            <ReplyForm />
            <ShareRow />
            <Breadcrumb />
          </div>
          <div className="mt-[15px] flex flex-1 flex-col">
            <Footer />
          </div>
        </main>
        <Scrollbar />
      </div>
      <div className="flex h-[2px] shrink-0 bg-black">
        <span className="ml-[222px] w-9 bg-[#333]" />
      </div>
    </div>
  )
}
